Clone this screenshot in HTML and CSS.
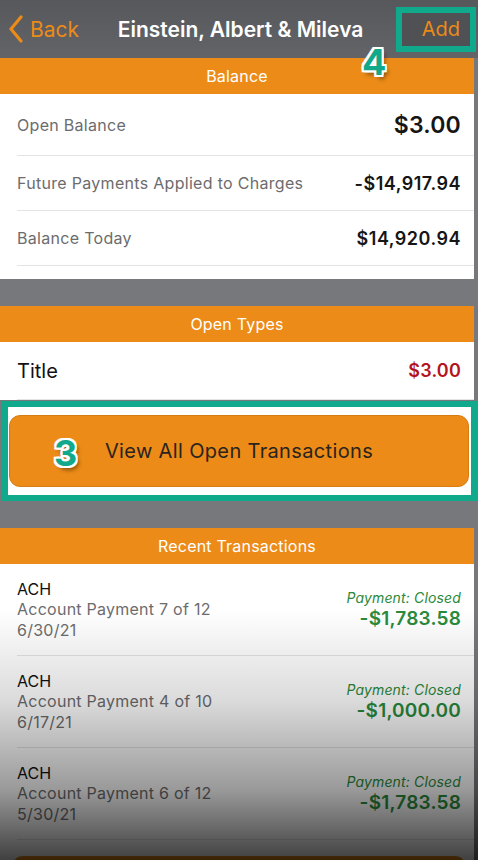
FILE: index.html
```html
<!DOCTYPE html>
<html lang="en">
<head>
  <meta charset="UTF-8" />
  <meta name="viewport" content="width=device-width, initial-scale=1.0" />
  <title>Einstein, Albert &amp; Mileva</title>
  <link rel="stylesheet" href="styles.css">
</head>
<body>
  <div class="screen">
    <div class="notch"></div>

    <header class="navbar">
      <a class="back" href="#">
        <svg class="chevron" width="16" height="28" viewBox="0 0 16 28">
          <path d="M13 2 L3 14 L13 26" fill="none" stroke="#ec8b17" stroke-width="3.2" stroke-linecap="round" stroke-linejoin="round" />
        </svg>
        Back
      </a>
      <h1 class="title">Einstein, Albert &amp; Mileva</h1>
      <a class="add" href="#">Add</a>
      <span class="marker marker-4">4</span>
    </header>

    <main class="content">
      <h2 class="section-head">Balance</h2>
      <ul class="list balance">
        <li class="row row-first">
          <span class="label">Open Balance</span>
          <span class="value value-lg">$3.00</span>
        </li>
        <li class="row">
          <span class="label">Future Payments Applied to Charges</span>
          <span class="value">-$14,917.94</span>
        </li>
        <li class="row">
          <span class="label">Balance Today</span>
          <span class="value">$14,920.94</span>
        </li>
      </ul>

      <div class="gap"></div>

      <h2 class="section-head">Open Types</h2>
      <ul class="list">
        <li class="row row-type">
          <span class="type-name">Title</span>
          <span class="value value-red">$3.00</span>
        </li>
      </ul>

      <div class="highlight">
        <button class="btn-open">View All Open Transactions</button>
        <span class="marker marker-3">3</span>
      </div>

      <div class="gap"></div>

      <h2 class="section-head">Recent Transactions</h2>
      <ul class="list">
        <li class="txn">
          <div class="txn-info">
            <span class="txn-type">ACH</span>
            <span class="txn-desc">Account Payment 7 of 12</span>
            <span class="txn-desc">6/30/21</span>
          </div>
          <div class="txn-amount">
            <span class="txn-status">Payment: Closed</span>
            <span class="txn-value">-$1,783.58</span>
          </div>
        </li>
        <li class="txn">
          <div class="txn-info">
            <span class="txn-type">ACH</span>
            <span class="txn-desc">Account Payment 4 of 10</span>
            <span class="txn-desc">6/17/21</span>
          </div>
          <div class="txn-amount">
            <span class="txn-status">Payment: Closed</span>
            <span class="txn-value">-$1,000.00</span>
          </div>
        </li>
        <li class="txn">
          <div class="txn-info">
            <span class="txn-type">ACH</span>
            <span class="txn-desc">Account Payment 6 of 12</span>
            <span class="txn-desc">5/30/21</span>
          </div>
          <div class="txn-amount">
            <span class="txn-status">Payment: Closed</span>
            <span class="txn-value">-$1,783.58</span>
          </div>
        </li>
      </ul>
      <div class="bottom-pad">
        <div class="btn-more"></div>
      </div>
    </main>

    <div class="dim"></div>
  </div>
</body>
</html>
```

FILE: styles.css
```css
:root {
  --orange: #ec8b17;
  --teal: #10a98b;
  --gray-band: #77787c;
  --divider: #e4e4e6;
  --label: #6c6c6e;
  --green: #2a8a3c;
  --red: #b3141e;
}

* {
  box-sizing: border-box;
  font-family: Inter, Roboto, sans-serif;
}

body {
  margin: 0;
  background: var(--gray-band);
}

.screen {
  position: relative;
  width: 478px;
  height: 860px;
  overflow: hidden;
  background: var(--gray-band);
}

.notch {
  position: absolute;
  top: -10px;
  left: 173px;
  width: 133px;
  height: 19px;
  border-radius: 0 0 10px 10px;
  background: #47484b;
}

/* top bar */
.navbar {
  position: relative;
  height: 58px;
  display: flex;
  align-items: center;
  padding: 0 2px 0 8px;
  background: linear-gradient(#56585c, #626468);
}

.back {
  display: flex;
  align-items: center;
  gap: 6px;
  color: var(--orange);
  text-decoration: none;
  font-size: 21px;
}

.title {
  flex: 1;
  margin: 0;
  padding-left: 6px;
  text-align: center;
  color: #fff;
  font-size: 21px;
  font-weight: 600;
}

.add {
  width: 80px;
  height: 45px;
  display: flex;
  align-items: center;
  justify-content: flex-end;
  padding-right: 10px;
  border: 6px solid var(--teal);
  background: #4f5154;
  color: var(--orange);
  text-decoration: none;
  font-size: 20px;
}

.marker {
  position: absolute;
  color: var(--teal);
  font-weight: 700;
  font-size: 36px;
  line-height: 1;
  text-shadow:
    2px 0 0 #fff, -2px 0 0 #fff, 0 2px 0 #fff, 0 -2px 0 #fff,
    2px 2px 0 #fff, -2px -2px 0 #fff, 2px -2px 0 #fff, -2px 2px 0 #fff,
    3px 4px 4px rgba(0, 0, 0, 0.45);
}

.marker-4 {
  top: 44px;
  left: 362px;
}

/* content */
.content {
  margin-right: 4px;
  background: var(--gray-band);
}

.section-head {
  margin: 0;
  height: 36px;
  line-height: 36px;
  text-align: center;
  background: var(--orange);
  color: #fff;
  font-size: 16px;
  font-weight: 400;
  letter-spacing: 0.2px;
}

.list {
  list-style: none;
  margin: 0;
  padding: 0 0 0 17px;
  background: #fff;
}

.balance {
  padding-bottom: 13px;
}

.row {
  display: flex;
  align-items: center;
  justify-content: space-between;
  height: 55px;
  padding-right: 13px;
  border-bottom: 1px solid var(--divider);
}

.row-first {
  height: 62px;
}

.label {
  color: var(--label);
  font-size: 16px;
  letter-spacing: 0.3px;
}

.value {
  color: #151515;
  font-size: 18px;
  font-weight: 600;
  letter-spacing: 0.5px;
}

.value-lg {
  font-size: 23px;
  letter-spacing: 0.2px;
}

.value-red {
  color: var(--red);
  letter-spacing: 0.2px;
}

.row-type {
  height: 58px;
}

.type-name {
  font-size: 20px;
  color: #111;
}

.highlight {
  position: relative;
  margin: 1px -3px 0 2px;
  padding: 8px 2px 8px 1px;
  border: 6px solid var(--teal);
  background: #fff;
}

.btn-open {
  display: block;
  width: 100%;
  height: 72px;
  border: 1px solid #d57c12;
  border-radius: 11px;
  background: var(--orange);
  color: #2a241e;
  font-size: 20px;
  letter-spacing: 0.35px;
  cursor: pointer;
}

.highlight .marker-3 {
  top: 28px;
  left: 46px;
}

.gap {
  height: 27px;
}

.txn {
  display: flex;
  align-items: center;
  justify-content: space-between;
  height: 92px;
  padding-right: 13px;
  border-bottom: 1px solid var(--divider);
}

.txn-info,
.txn-amount {
  display: flex;
  flex-direction: column;
}

.txn-amount {
  align-items: flex-end;
}

.txn-type {
  font-size: 16px;
  line-height: 20.5px;
  color: #111;
}

.txn-desc {
  font-size: 16px;
  line-height: 20.5px;
  letter-spacing: 0.25px;
  color: var(--label);
}

.txn-status {
  font-size: 14px;
  font-style: italic;
  line-height: 18px;
  letter-spacing: 0.15px;
  color: var(--green);
}

.txn-value {
  font-size: 19px;
  font-weight: 600;
  line-height: 24px;
  letter-spacing: 0.2px;
  color: var(--green);
}

.bottom-pad {
  padding: 16px 8px 0 12px;
  background: #fff;
}

.btn-more {
  height: 60px;
  border-radius: 11px;
  background: var(--orange);
}

/* screen dimming toward the bottom */
.dim {
  position: absolute;
  left: 0;
  right: 0;
  top: 610px;
  bottom: 0;
  pointer-events: none;
  background: linear-gradient(rgba(0, 0, 0, 0), rgba(0, 0, 0, 0.14) 90px, rgba(0, 0, 0, 0.4) 180px, rgba(0, 0, 0, 0.75) 250px);
}
```
